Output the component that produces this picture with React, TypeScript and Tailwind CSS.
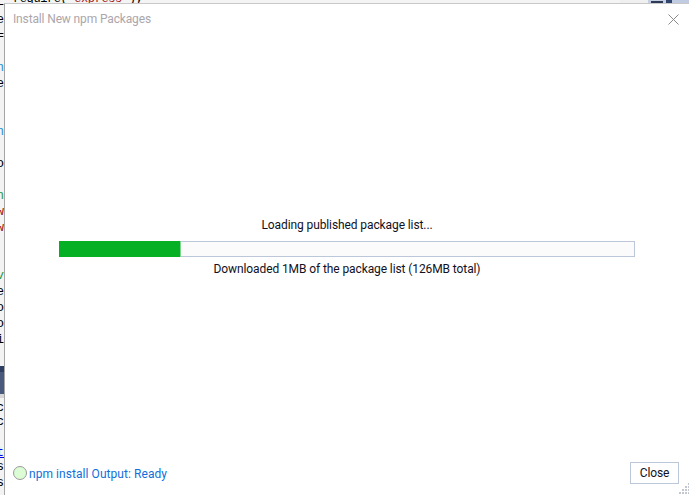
import React from "react";

const ROWS: { top: number; ch: string; cls: string }[] = [
  { top: -7, ch: "=", cls: "text-black" },
  { top: 0, ch: "e", cls: "text-black" },
  { top: 0, ch: "=", cls: "text-black" },
  { top: 16, ch: "n", cls: "text-[#2b91d8]" },
  { top: 0, ch: "e", cls: "text-black" },
  { top: 32, ch: "n", cls: "text-[#2b91d8]" },
  { top: 16, ch: "o", cls: "text-black" },
  { top: 16, ch: "n", cls: "text-[#2f9a4a]" },
  { top: 0, ch: "w", cls: "text-[#a31515]" },
  { top: 0, ch: "w", cls: "text-[#a31515]" },
  { top: 32, ch: "v", cls: "text-[#2f9a4a]" },
  { top: 0, ch: "e", cls: "text-black" },
  { top: 0, ch: "o", cls: "text-black" },
  { top: 0, ch: "o", cls: "text-black" },
  { top: 0, ch: "i", cls: "text-black" },
];

function Glyph({ ch, cls, top }: { ch: string; cls: string; top: number }) {
  return (
    <div
      className={`h-[16px] shrink-0 flex justify-end font-['Liberation_Mono',monospace] text-[13px] leading-[16px] ${cls}`}
      style={{ marginTop: top }}
    >
      {ch}
    </div>
  );
}

function Grip() {
  const dots: [number, number][] = [
    [9, 0], [6, 3], [9, 3], [3, 6], [6, 6], [9, 6], [0, 9], [3, 9], [6, 9], [9, 9],
  ];
  return (
    <svg width="11" height="12" className="block" aria-hidden="true">
      {dots.map(([x, y], i) => (
        <rect key={i} x={x} y={y} width="2" height="2" fill="#c3c7d0" />
      ))}
    </svg>
  );
}

export default function App() {
  return (
    <div className="w-[689px] h-[495px] overflow-hidden flex flex-col bg-white font-['Roboto','Open_Sans',sans-serif] tracking-[-0.1px]">
      {/* Editor peeking out above the dialog */}
      <div className="h-[3px] shrink-0 flex bg-[#f4f4f4] overflow-hidden">
        <div className="w-[13px] shrink-0" />
        <div className="w-[607px] shrink-0 -mt-[9px] h-[16px] font-['Liberation_Mono',monospace] text-[12px] tracking-[-0.4px] leading-[16px] text-black whitespace-pre">
          require(<span className="text-[#a31515]">'express'</span>);
        </div>
        <div className="w-[28px] shrink-0 bg-[#efefef]" />
        <div className="w-[18px] shrink-0 bg-[#c5cfe3] flex justify-center">
          <div className="w-[12px] h-[2px] mt-[1px] bg-[#2c3a55]" />
        </div>
        <div className="w-[6px] shrink-0 bg-[#2f456d]" />
        <div className="flex-1 bg-[#c0cbe2]" />
      </div>

      <div className="flex-1 flex min-h-0">
        {/* Editor peeking out left of the dialog */}
        <div className="w-[4px] shrink-0 flex flex-col overflow-hidden bg-[#f3f3f3]">
          <div className="h-[363px] shrink-0 overflow-hidden">
            {ROWS.map((r, i) => (
              <Glyph key={i} ch={r.ch} cls={r.cls} top={r.top} />
            ))}
          </div>
          <div className="h-[6px] shrink-0 bg-[#2c3f63]" />
          <div className="h-[22px] shrink-0 bg-[#47597c]" />
          <div className="h-[4px] shrink-0 bg-[#d6d6d6]" />
          <Glyph ch="c" cls="text-black" top={2} />
          <Glyph ch="c" cls="text-black" top={-2} />
          <div className="h-[15px] shrink-0" />
          <div className="h-[16px] shrink-0 flex justify-end font-['Liberation_Mono',monospace] text-[13px] leading-[16px] text-[#0000ee] underline">
            t
          </div>
          <Glyph ch="s" cls="text-black" top={-2} />
          <Glyph ch="s" cls="text-black" top={0} />
        </div>

        {/* Dialog */}
        <div className="flex-1 flex flex-col min-w-0 bg-white border-l border-l-[#a6a6a6] border-t border-t-[#c8c8c8]">
          <div className="h-[29px] shrink-0 flex items-center justify-between pl-[8px] pr-[10px] pt-[1px]">
            <span className="text-[12px] leading-[16px] text-[#aba6ab] tracking-[-0.14px]">Install New npm Packages</span>
            <svg width="11" height="11" viewBox="0 0 11 11" className="block" aria-hidden="true">
              <path d="M0.5 0.5 L10.5 10.5 M10.5 0.5 L0.5 10.5" stroke="#8a8a8a" strokeWidth="1" fill="none" />
            </svg>
          </div>

          <div className="flex-1 flex flex-col pl-[54px] pr-[54px] pt-[184px] min-h-0 items-stretch">
            <div className="text-center text-[12px] leading-[16px] text-[#111122]">
              Loading published package list...
            </div>
            <div className="mt-[8px] h-[16px] bg-[#fbfbfb] border-y border-r border-[#bcc7da] flex">
              <div className="w-[122px] -my-px bg-[#06b025] border-r border-r-[#7fd48f]" />
            </div>
            <div className="mt-[4px] text-center text-[12px] leading-[16px] text-[#111122]">
              Downloaded 1MB of the package list (126MB total)
            </div>
          </div>

          <div className="shrink-0 h-[33px] flex items-start justify-between pl-[8px]">
            <div className="flex items-start gap-[2px] mt-[4px]">
              <div className="w-[14px] h-[14px] rounded-full bg-[#dcfcd6] border border-[#9a9a9a]" />
              <span className="text-[12px] leading-[16px] text-[#0f6fdb] tracking-[0.06px]">npm install Output: Ready</span>
            </div>
            <div className="flex items-start">
              <button className="w-[49px] h-[22px] bg-white border border-[#bcc7da] text-[12px] leading-[16px] text-[#111122]">
                Close
              </button>
              <div className="w-[10px] h-[33px] flex items-end justify-end">
                <Grip />
              </div>
            </div>
          </div>
        </div>
      </div>
    </div>
  );
}
